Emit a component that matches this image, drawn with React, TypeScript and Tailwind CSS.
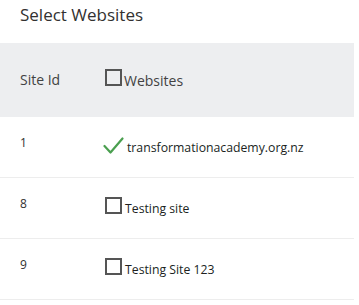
import React from "react";

interface Site {
  id: number;
  name: string;
  selected: boolean;
}

const sites: Site[] = [
  { id: 1, name: "transformationacademy.org.nz", selected: true },
  { id: 8, name: "Testing site", selected: false },
  { id: 9, name: "Testing Site 123", selected: false },
];

function Box() {
  return <span className="inline-block h-[17px] w-[17px] shrink-0 border-2 border-[#555555]" />;
}

function Check() {
  return (
    <svg width="21" height="17" viewBox="0 0 21 17" fill="none" stroke="#4a9f4f" strokeWidth="2.2" strokeLinecap="round" strokeLinejoin="round" className="shrink-0">
      <polyline points="1.5 9 7.5 15.5 19.5 1.5" />
    </svg>
  );
}

export default function App() {
  return (
    <div className="h-[305px] w-[359px] bg-white text-[#323130]" style={{ fontFamily: '"Open Sans", "Noto Sans", sans-serif' }}>
      <h2 className="h-[43px] pl-5 pt-[3px] text-[17px] leading-[24px] font-normal">Select Websites</h2>
      <div className="w-[354px]">
        {/* header */}
        <div className="flex h-[74px] items-center bg-[#edeef0] text-[14px] text-[#424242]">
          <div className="w-[105px] pl-5 leading-[20px]">Site Id</div>
          <div className="flex items-start pb-[2px]">
            <Box />
            <span className="ml-[2px] mt-[3px] leading-[17px]">Websites</span>
          </div>
        </div>
        {sites.map((s) => (
          <div key={s.id} className="flex h-[61px] border-b border-[#ededed] text-[12.25px]">
            <div className="w-[105px] pl-5 pt-[18px] text-[12px] leading-[16px]">{s.id}</div>
            <div className="flex items-start pt-[19px]">
              {s.selected ? (
                <span className="-ml-[2px] mt-[1px]"><Check /></span>
              ) : (
                <Box />
              )}
              <span className="ml-[3px] mt-[4px] leading-[16px] text-[#201f1e]">{s.name}</span>
            </div>
          </div>
        ))}
      </div>
    </div>
  );
}
